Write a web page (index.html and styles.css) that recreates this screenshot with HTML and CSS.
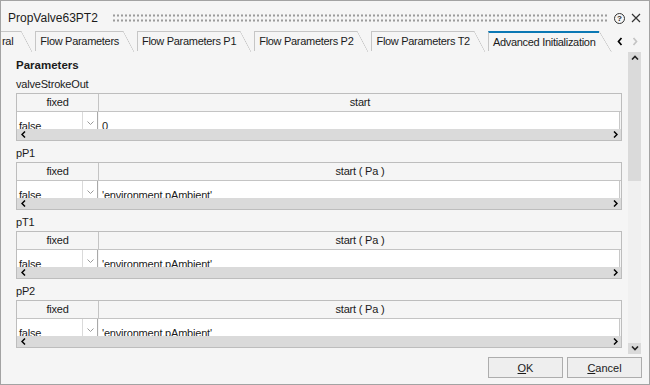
FILE: index.html
```html
<!DOCTYPE html>
<html lang="en">
<head>
    <meta charset="UTF-8">
    <title>PropValve63PT2</title>
    <link rel="stylesheet" href="styles.css">
</head>
<body>
    <div class="window">
        <div class="titlebar">
            <span class="title">PropValve63PT2</span>
            <span class="gripper"></span>
            <span class="help">?</span>
            <svg class="close" width="10" height="10" viewBox="0 0 10 10"><path d="M1 1 L9 9 M9 1 L1 9" stroke="#333" stroke-width="1.2" fill="none"/></svg>
        </div>

        <div class="tabbar">
            <div class="tabs">
                <div class="tab first">ral</div>
                <div class="tab">Flow Parameters</div>
                <div class="tab">Flow Parameters P1</div>
                <div class="tab">Flow Parameters P2</div>
                <div class="tab">Flow Parameters T2</div>
                <div class="tab active">Advanced Initialization</div>
            </div>
            <div class="tab-arrows">
                <svg width="6" height="9" viewBox="0 0 6 9"><path d="M4.5 1 L1.5 4.5 L4.5 8" stroke="#000" stroke-width="1.7" fill="none"/></svg>
                <svg width="6" height="9" viewBox="0 0 6 9"><path d="M1.5 1 L4.5 4.5 L1.5 8" stroke="#c4c4c4" stroke-width="1.7" fill="none"/></svg>
            </div>
        </div>

        <div class="panel">
            <div class="content">
                <div class="heading">Parameters</div>

                <div class="label top">valveStrokeOut</div>
                <div class="grid">
                    <div class="grid-head">
                        <div class="col-fixed">fixed</div>
                        <div class="col-start">start</div>
                    </div>
                    <div class="grid-row">
                        <div class="combo">
                            <span class="combo-text">false</span>
                            <span class="combo-btn"><svg width="7" height="4" viewBox="0 0 7 4"><path d="M0.5 0.5 L3.5 3.5 L6.5 0.5" stroke="#9a9a9a" fill="none"/></svg></span>
                        </div>
                        <div class="value">0</div>
                    </div>
                    <div class="hscroll">
                        <svg width="5" height="7" viewBox="0 0 5 7"><path d="M4 0.5 L1 3.5 L4 6.5" stroke="#000" stroke-width="1.5" fill="none"/></svg>
                        <svg width="5" height="7" viewBox="0 0 5 7"><path d="M1 0.5 L4 3.5 L1 6.5" stroke="#000" stroke-width="1.5" fill="none"/></svg>
                    </div>
                </div>

                <div class="label">pP1</div>
                <div class="grid">
                    <div class="grid-head">
                        <div class="col-fixed">fixed</div>
                        <div class="col-start">start ( Pa )</div>
                    </div>
                    <div class="grid-row">
                        <div class="combo">
                            <span class="combo-text">false</span>
                            <span class="combo-btn"><svg width="7" height="4" viewBox="0 0 7 4"><path d="M0.5 0.5 L3.5 3.5 L6.5 0.5" stroke="#9a9a9a" fill="none"/></svg></span>
                        </div>
                        <div class="value">'environment.pAmbient'</div>
                    </div>
                    <div class="hscroll">
                        <svg width="5" height="7" viewBox="0 0 5 7"><path d="M4 0.5 L1 3.5 L4 6.5" stroke="#000" stroke-width="1.5" fill="none"/></svg>
                        <svg width="5" height="7" viewBox="0 0 5 7"><path d="M1 0.5 L4 3.5 L1 6.5" stroke="#000" stroke-width="1.5" fill="none"/></svg>
                    </div>
                </div>

                <div class="label">pT1</div>
                <div class="grid">
                    <div class="grid-head">
                        <div class="col-fixed">fixed</div>
                        <div class="col-start">start ( Pa )</div>
                    </div>
                    <div class="grid-row">
                        <div class="combo">
                            <span class="combo-text">false</span>
                            <span class="combo-btn"><svg width="7" height="4" viewBox="0 0 7 4"><path d="M0.5 0.5 L3.5 3.5 L6.5 0.5" stroke="#9a9a9a" fill="none"/></svg></span>
                        </div>
                        <div class="value">'environment.pAmbient'</div>
                    </div>
                    <div class="hscroll">
                        <svg width="5" height="7" viewBox="0 0 5 7"><path d="M4 0.5 L1 3.5 L4 6.5" stroke="#000" stroke-width="1.5" fill="none"/></svg>
                        <svg width="5" height="7" viewBox="0 0 5 7"><path d="M1 0.5 L4 3.5 L1 6.5" stroke="#000" stroke-width="1.5" fill="none"/></svg>
                    </div>
                </div>

                <div class="label">pP2</div>
                <div class="grid">
                    <div class="grid-head">
                        <div class="col-fixed">fixed</div>
                        <div class="col-start">start ( Pa )</div>
                    </div>
                    <div class="grid-row">
                        <div class="combo">
                            <span class="combo-text">false</span>
                            <span class="combo-btn"><svg width="7" height="4" viewBox="0 0 7 4"><path d="M0.5 0.5 L3.5 3.5 L6.5 0.5" stroke="#9a9a9a" fill="none"/></svg></span>
                        </div>
                        <div class="value">'environment.pAmbient'</div>
                    </div>
                    <div class="hscroll">
                        <svg width="5" height="7" viewBox="0 0 5 7"><path d="M4 0.5 L1 3.5 L4 6.5" stroke="#000" stroke-width="1.5" fill="none"/></svg>
                        <svg width="5" height="7" viewBox="0 0 5 7"><path d="M1 0.5 L4 3.5 L1 6.5" stroke="#000" stroke-width="1.5" fill="none"/></svg>
                    </div>
                </div>
            </div>

            <div class="vscroll">
                <div class="vbtn"><svg width="8" height="5" viewBox="0 0 8 5"><path d="M1 4.5 L4 1.5 L7 4.5" stroke="#222" stroke-width="1.6" fill="none"/></svg></div>
                <div class="thumb"></div>
                <div class="track"></div>
                <div class="vbtn"><svg width="8" height="5" viewBox="0 0 8 5"><path d="M1 0.5 L4 3.5 L7 0.5" stroke="#222" stroke-width="1.6" fill="none"/></svg></div>
            </div>
        </div>

        <div class="footer">
            <button class="btn"><u>O</u>K</button>
            <button class="btn"><u>C</u>ancel</button>
        </div>
    </div>
</body>
</html>
```

FILE: styles.css
```css
* { box-sizing: border-box; }
body {
    margin: 0;
    font-family: 'Liberation Sans', Arial, sans-serif;
    font-size: 11px;
    color: #1b1b1b;
    background-color: #ffffff;
}
.window {
    width: 650px;
    height: 385px;
    border: 1px solid #a3a3a3;
    background-color: #f5f5f5;
    display: flex;
    flex-direction: column;
    overflow: hidden;
    letter-spacing: -0.2px;
}
.titlebar {
    height: 30px;
    padding-top: 4px;
    padding-left: 7px;
    display: flex;
    align-items: center;
    flex-shrink: 0;
}
.title {
    font-size: 12px;
    letter-spacing: 0;
}
.gripper {
    flex: 1;
    height: 10px;
    margin: 0 6px 0 14px;
    background: radial-gradient(#9c9c9c 0.8px, transparent 1.1px) 0 0 / 4px 5px;
}
.help {
    width: 11px;
    height: 11px;
    border: 1px solid #333;
    border-radius: 50%;
    font-size: 8px;
    font-weight: bold;
    line-height: 9px;
    text-align: center;
    letter-spacing: 0;
}
.close {
    margin-left: 6px;
    margin-right: 8px;
}
.tabbar {
    height: 21px;
    display: flex;
    flex-shrink: 0;
}
.tabs {
    flex: 1;
    display: flex;
    overflow: hidden;
}
.tab {
    position: relative;
    height: 20px;
    padding: 0 4px;
    margin-right: 14px;
    border-top: 1px solid #c6c6c6;
    border-left: 1px solid #c6c6c6;
    line-height: 19px;
    white-space: nowrap;
    letter-spacing: -0.3px;
}
.tab::after {
    content: "";
    position: absolute;
    left: 100%;
    top: -1px;
    width: 11px;
    height: 21px;
    background: linear-gradient(to top right, transparent calc(50% - 0.6px), #c6c6c6 50%, transparent calc(50% + 0.6px));
}
.tab.first {
    border-left: none;
    padding: 0 8px 0 1px;
}
.tab.active {
    border-top: 2px solid #0b78b4;
    line-height: 18px;
    margin-right: 0;
}
.tab.active::after {
    top: -2px;
    width: 13px;
    height: 22px;
}
.tab-arrows {
    width: 37px;
    display: flex;
    align-items: center;
    gap: 9px;
    padding-left: 5px;
    padding-bottom: 1px;
}
.panel {
    flex: 1;
    display: flex;
    min-height: 0;
}
.content {
    flex: 1;
    padding: 5px 6px 0 15px;
    overflow: hidden;
}
.heading {
    font-weight: bold;
    font-size: 11.5px;
    line-height: 16px;
    letter-spacing: 0;
}
.label {
    height: 21px;
    padding-top: 3px;
    line-height: 18px;
}
.label.top {
    height: 20px;
    padding-top: 2px;
}
.grid {
    height: 48px;
    border: 1px solid #bdbdbd;
    display: flex;
    flex-direction: column;
}
.grid-head {
    height: 18px;
    display: flex;
    border-bottom: 1px solid #c4c4c4;
    line-height: 17px;
    text-align: center;
}
.col-fixed {
    width: 82px;
    border-right: 1px solid #c4c4c4;
}
.col-start {
    flex: 1;
}
.grid-row {
    height: 17px;
    display: flex;
    overflow: hidden;
}
.combo {
    width: 81px;
    display: flex;
    background-color: #fff;
    border-right: 1px solid #a9a9a9;
}
.combo-text {
    width: 66px;
    padding: 6px 0 0 2px;
    line-height: 16px;
    border-right: 1px solid #dadada;
}
.combo-btn {
    flex: 1;
    display: flex;
    justify-content: center;
    padding-top: 9px;
}
.value {
    flex: 1;
    margin: 0 1px 0 1px;
    padding: 6px 0 0 3px;
    line-height: 16px;
    background-color: #fff;
    border-right: 1px solid #c8c8c8;
}
.hscroll {
    height: 11px;
    background-color: #dadada;
    display: flex;
    align-items: center;
    justify-content: space-between;
    padding: 0 3px 0 4px;
}
.vscroll {
    width: 13px;
    margin-right: 8px;
    display: flex;
    flex-direction: column;
}
.vbtn {
    height: 11px;
    background-color: #dadada;
    display: flex;
    align-items: center;
    justify-content: center;
}
.thumb {
    height: 118px;
    background-color: #dadada;
}
.track {
    flex: 1;
    background-color: #f0f0f0;
}
.footer {
    height: 30px;
    flex-shrink: 0;
    display: flex;
    justify-content: flex-end;
    gap: 4px;
    padding: 3px 7px 0 0;
}
.btn {
    width: 75px;
    height: 21px;
    border: 1px solid #adadad;
    background-color: #eeeeee;
    font-family: 'Liberation Sans', Arial, sans-serif;
    font-size: 11px;
    color: #1b1b1b;
    padding: 0;
}
```
